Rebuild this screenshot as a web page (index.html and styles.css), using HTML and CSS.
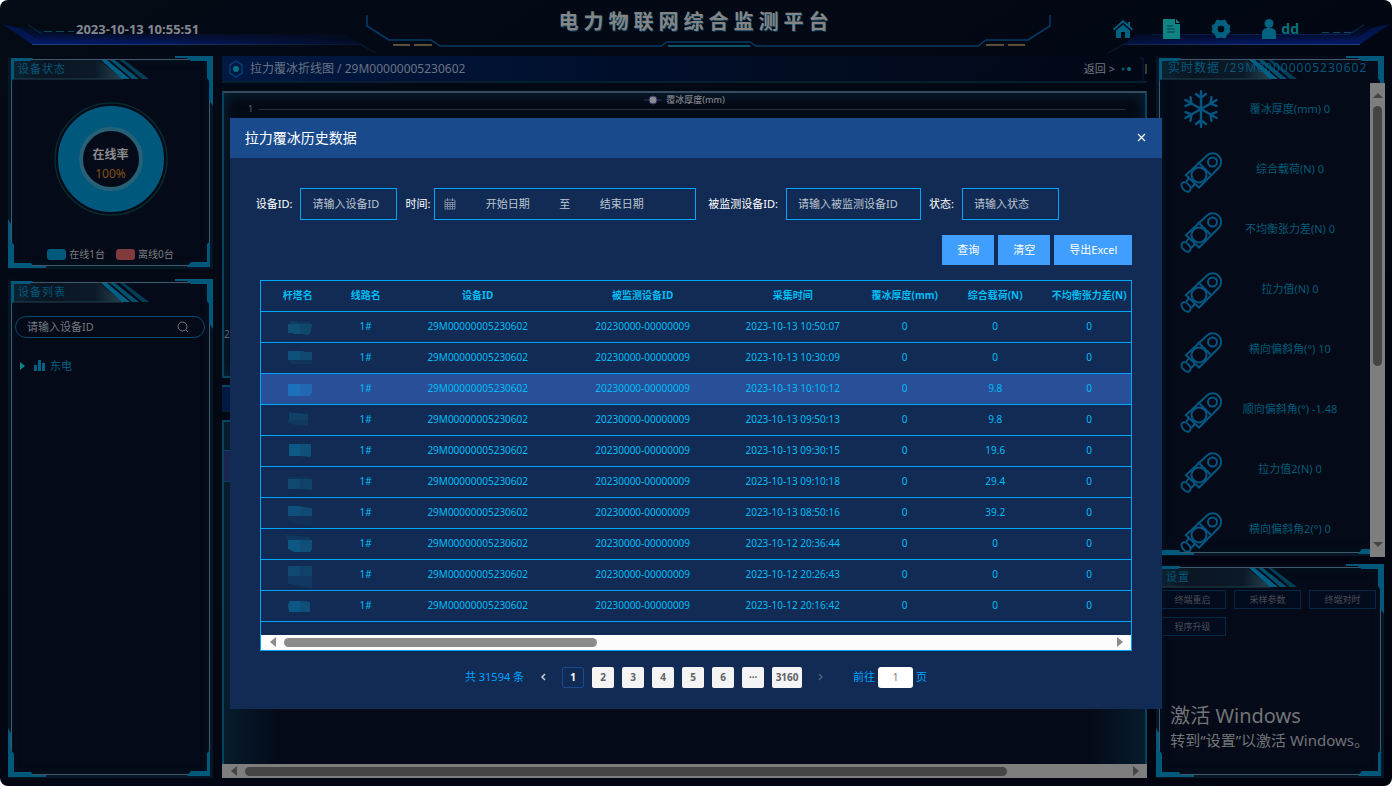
FILE: index.html
```html
<!DOCTYPE html>
<html lang="zh-CN">
<head>
<meta charset="utf-8">
<title>电力物联网综合监测平台</title>
<link rel="stylesheet" href="styles.css">
</head>
<body>
<svg class="defs" aria-hidden="true">
  <defs>
    <linearGradient id="tabFill" x1="0" x2="1" y1="0" y2="0"><stop offset="0" stop-color="#0c2433"/><stop offset=".3" stop-color="#0a1522"/><stop offset=".75" stop-color="#0c1a28"/><stop offset="1" stop-color="#26434f"/></linearGradient>
    <linearGradient id="wedge" x1="0" x2="0" y1="0" y2="1"><stop offset="0" stop-color="#041450" stop-opacity="0"/><stop offset=".5" stop-color="#041450" stop-opacity=".5"/><stop offset="1" stop-color="#061d78"/></linearGradient>
    <linearGradient id="fade" x1="0" x2="1" y1="0" y2="0"><stop offset="0" stop-color="#fff"/><stop offset=".4" stop-color="#fff" stop-opacity=".8"/><stop offset="1" stop-color="#fff" stop-opacity=".1"/></linearGradient>
    <mask id="fadeMask" maskUnits="userSpaceOnUse" x="0" y="0" width="400" height="56"><rect width="400" height="56" fill="url(#fade)"/></mask>
    <symbol id="c-tl" viewBox="0 0 24 26"><path d="M0 0H22L19 3H3V20L0 24Z" fill="#00587b"/></symbol>
    <symbol id="c-tr" viewBox="0 0 38 50"><path d="M0 0H38V50L34 44V25L32 22V5H16L12 2H0Z" fill="#00587b"/></symbol>
    <symbol id="c-bl" viewBox="0 0 38 50"><path d="M0 0L3 5V22L6 26V44H23L25 47H38V49H0Z" fill="#00587b"/></symbol>
    <symbol id="c-br" viewBox="0 0 24 26"><path d="M23 0V26H0L4 21H20V3Z" fill="#00587b"/></symbol>
    <symbol id="tab" viewBox="0 0 140 20"><path d="M0 0H88L112 19H0Z" fill="url(#tabFill)"/><path d="M0 19H112" stroke="#23414f"/><path d="M90 0H96L119 19H111Z" fill="#005f84"/><path d="M99 0H104L128 19H121Z" fill="#00506f"/><path d="M109 0H113L138 19H131Z" fill="#003d57"/></symbol>
    <symbol id="sensor" viewBox="0 0 42 46"><g fill="none" stroke="#025782" stroke-width="2"><path d="M19 15L27 7.500A8.500 8.500 0 0 1 39 19.500L19 39.500L6 27Z"/><path d="M18 14L31 27"/><circle cx="19" cy="27" r="7.500"/><circle cx="32.500" cy="14" r="4.500"/><path d="M9 30L6 34M15 36L11 40"/><ellipse cx="6" cy="39" rx="3.500" ry="5.500" transform="rotate(-42 6 39)"/></g></symbol>
  </defs>
</svg>

<div class="app">
  <header class="top">
    <svg class="top-art" viewBox="0 0 1392 56" preserveAspectRatio="none" aria-hidden="true">
      <g mask="url(#fadeMask)"><path d="M2 24L32 44H360L345 34H70L40 30Z" fill="url(#wedge)"/><path d="M2 24L32 44L44 44L20 28Z" fill="#041a5c" opacity=".7"/><path d="M32 44.500H360" stroke="#1d4379"/></g>
      <path d="M360 44L376 53" stroke="#0a2038"/>
      <path d="M28 25L42 34" stroke="#063244"/>
      <g transform="translate(1392 0) scale(-1 1)"><g mask="url(#fadeMask)"><path d="M2 24L32 44H268L255 34H70L40 30Z" fill="url(#wedge)"/><path d="M2 24L32 44L44 44L20 28Z" fill="#041a5c" opacity=".7"/><path d="M32 44.500H268" stroke="#1d4379"/><path d="M42 34.500H240" stroke="#06255e"/></g><path d="M268 44L284 53" stroke="#0a2038"/><path d="M28 25L42 34" stroke="#063244"/></g>
      <path d="M44 31.500H74" stroke="#0a4a55" stroke-dasharray="8 4"/>
      <path d="M1322 32.500H1352" stroke="#0a4a55" stroke-dasharray="7 4"/>
      <path d="M367 15V26L389 40H431L440 46H661L667 42H750L756 46H978L986 40H1028L1050 26V15" fill="none" stroke="#033b66" stroke-width="1.500"/>
      <path d="M668 46H750" stroke="#0c5268" stroke-width="2"/>
      <path d="M393 45H410M414 45H432M986 45H1004M1008 45H1025" stroke="#5a4f38" stroke-width="2"/>
    </svg>
    <time class="clock">2023-10-13 10:55:51</time>
    <h1 class="brand">电力物联网综合监测平台</h1>
    <nav class="tools">
      <a href="#home" aria-label="首页"><svg width="20" height="20" viewBox="0 0 20 20"><path fill="#006282" d="M10 1L0 10L1 11.500L10 3.500L19 11.500L20 10L17 7V3H15V5ZM10 5.500L3 11.500V19H8V13H12V19H17V11.500Z"/></svg></a>
      <a href="#report" aria-label="报表"><svg width="18" height="20" viewBox="0 0 18 20"><path fill="#0f8583" d="M0 0H12V5H17V20H0ZM13 0L17 4H13Z"/><path d="M4 7H10M4 10H12M4 13H12" stroke="#033a4c"/></svg></a>
      <a href="#settings" aria-label="设置"><svg width="20" height="20" viewBox="0 0 20 20"><path fill="#006282" fill-rule="evenodd" d="M6 1L10 2L14 1L16 5L19 7L18 10L19 13L16 15L14 19L10 18L6 19L4 15L1 13L2 10L1 7L4 5ZM10 6A4 4 0 1 0 10 14A4 4 0 1 0 10 6Z" stroke="#006282" stroke-linejoin="round"/></svg></a>
      <a href="#user" class="user"><svg width="16" height="20" viewBox="0 0 16 20"><circle cx="8" cy="4.500" r="4.500" fill="#006282"/><path fill="#006282" d="M1 20V14C1 10 4 9 8 9S15 10 15 14V20Z"/></svg>dd</a>
    </nav>
  </header>

  <main class="board">
    <div class="col side-left">
      <section class="panel status">
        <svg class="tab"><use href="#tab"/></svg><svg class="k tl"><use href="#c-tl"/></svg><svg class="k tr"><use href="#c-tr"/></svg><svg class="k bl"><use href="#c-bl"/></svg><svg class="k br"><use href="#c-br"/></svg>
        <h2>设备状态</h2>
        <div class="donut">
          <svg width="116" height="116" viewBox="0 0 116 116" aria-hidden="true"><circle cx="58" cy="58" r="56" fill="none" stroke="#052a30" stroke-width="1.500"/><circle cx="58" cy="58" r="41" fill="none" stroke="#00597c" stroke-width="24"/><circle cx="58" cy="58" r="30" fill="none" stroke="#266178" stroke-width="4"/></svg>
          <div class="donut-text"><b>在线率</b><span>100%</span></div>
        </div>
        <div class="legend"><i class="on"></i><span>在线1台</span><i class="off"></i><span>离线0台</span></div>
      </section>
      <section class="panel devices">
        <svg class="tab"><use href="#tab"/></svg><svg class="k tl"><use href="#c-tl"/></svg><svg class="k tr"><use href="#c-tr"/></svg><svg class="k bl"><use href="#c-bl"/></svg><svg class="k br"><use href="#c-br"/></svg>
        <h2>设备列表</h2>
        <div class="search"><input type="text" placeholder="请输入设备ID" aria-label="搜索设备ID"><svg width="12" height="12" viewBox="0 0 12 12"><circle cx="5.500" cy="5.500" r="4.500" fill="none" stroke="#747980"/><path d="M9 9L11 11" stroke="#747980"/></svg></div>
        <div class="tree"><svg width="6" height="8" viewBox="0 0 6 8"><path d="M0 0L5 4L0 8Z" fill="#0a8785"/></svg><svg width="12" height="12" viewBox="0 0 12 12"><path d="M0 5H3V11H0ZM4 0H7V11H4ZM8 3H11V11H8Z" fill="#006386"/></svg><span>东电</span></div>
      </section>
    </div>

    <div class="col center">
      <div class="crumb">
        <svg width="16" height="18" viewBox="0 0 16 18"><path d="M8 1L14 5V13L8 17L2 13V5Z" fill="none" stroke="#013e6d" stroke-width="1.500"/><circle cx="8" cy="9" r="3" fill="#0b7085"/></svg>
        <span class="crumb-text">拉力覆冰折线图 / 29M00000005230602</span>
        <a href="#back">返回 &gt;</a><svg width="34" height="24" viewBox="0 0 34 24"><circle cx="4" cy="12" r="1.500" fill="#07566c"/><circle cx="10" cy="12" r="2" fill="#087080"/><path d="M21 1H24V23H22" fill="none" stroke="#061d42"/><path d="M27 7V17" stroke="#777350"/></svg>
      </div>
      <section class="chart">
        <div class="series"><svg width="18" height="10" viewBox="0 0 18 10"><path d="M0 5H18" stroke="#2f3967"/><circle cx="9" cy="5" r="4" fill="#8a8a91" stroke="#2f3967"/></svg>覆冰厚度(mm)</div>
        <div class="axis"><span>1</span><hr></div>
        <span class="axis-end">2</span>
      </section>
      <div class="crumb second"></div>
      <section class="grid-under"><div class="grid-row"></div></section>
      <div class="hbar dim"><i class="arrow left"></i><i class="thumb"></i><i class="arrow right"></i></div>
    </div>

    <div class="col side-right">
      <section class="panel live">
        <svg class="tab"><use href="#tab"/></svg><svg class="k tl"><use href="#c-tl"/></svg><svg class="k tr"><use href="#c-tr"/></svg><svg class="k bl"><use href="#c-bl"/></svg><svg class="k br"><use href="#c-br"/></svg>
        <h2>实时数据 /29M00000005230602</h2>
        <div class="live-body">
          <ul>
            <li><svg width="42" height="42" viewBox="0 0 42 42"><g fill="none" stroke="#025782" stroke-width="2.400" stroke-linecap="round"><g id="arm"><path d="M21 19V1M16 4L21 8L26 4"/></g><use href="#arm" transform="rotate(60 21 19)"/><use href="#arm" transform="rotate(120 21 19)"/><use href="#arm" transform="rotate(180 21 19)"/><use href="#arm" transform="rotate(240 21 19)"/><use href="#arm" transform="rotate(300 21 19)"/></g></svg><span>覆冰厚度(mm) 0</span></li>
            <li><svg width="42" height="46"><use href="#sensor"/></svg><span>综合载荷(N) 0</span></li>
            <li><svg width="42" height="46"><use href="#sensor"/></svg><span>不均衡张力差(N) 0</span></li>
            <li><svg width="42" height="46"><use href="#sensor"/></svg><span>拉力值(N) 0</span></li>
            <li><svg width="42" height="46"><use href="#sensor"/></svg><span>横向偏斜角(°) 10</span></li>
            <li><svg width="42" height="46"><use href="#sensor"/></svg><span>顺向偏斜角(°) -1.48</span></li>
            <li><svg width="42" height="46"><use href="#sensor"/></svg><span>拉力值2(N) 0</span></li>
            <li><svg width="42" height="46"><use href="#sensor"/></svg><span>横向偏斜角2(°) 0</span></li>
          </ul>
          <div class="vbar"><i class="arrow up"></i><i class="thumb"></i><i class="arrow down"></i></div>
        </div>
      </section>
      <section class="panel setup">
        <svg class="tab"><use href="#tab"/></svg><svg class="k tl"><use href="#c-tl"/></svg><svg class="k tr"><use href="#c-tr"/></svg><svg class="k bl"><use href="#c-bl"/></svg><svg class="k br"><use href="#c-br"/></svg>
        <h2>设置</h2>
        <div class="setup-grid"><button type="button">终端重启</button><button type="button">采样参数</button><button type="button">终端对时</button><button type="button">程序升级</button></div>
      </section>
    </div>
  </main>

  <div class="overlay">
    <div class="dialog" role="dialog" aria-labelledby="dlg-title">
      <div class="dialog-head"><h2 id="dlg-title">拉力覆冰历史数据</h2><button type="button" aria-label="关闭"><svg width="9" height="9" viewBox="0 0 9 9"><path d="M1 1L8 8M8 1L1 8" stroke="#fff" stroke-width="1.200"/></svg></button></div>
      <div class="dialog-body">
        <form class="filters">
          <label for="dev">设备ID:</label><input id="dev" class="w-s" type="text" placeholder="请输入设备ID">
          <label for="from">时间:</label>
          <div class="range"><svg width="12" height="12" viewBox="0 0 12 12"><path d="M1 2H11V11H1ZM1 4.500H11M1 6.500H11M1 8.500H11M3.500 4V11M6 4V11M8.500 4V11M3.500 0V3M8.500 0V3" fill="none" stroke="#8c98ae" stroke-width=".8"/></svg><input id="from" type="text" placeholder="开始日期"><span>至</span><input type="text" placeholder="结束日期" aria-label="结束日期"></div>
          <label for="mon">被监测设备ID:</label><input id="mon" class="w-m" type="text" placeholder="请输入被监测设备ID">
          <label for="st">状态:</label><input id="st" class="w-s" type="text" placeholder="请输入状态">
        </form>
        <div class="actions"><button type="button">查询</button><button type="button">清空</button><button type="button">导出Excel</button></div>
        <div class="table-box">
          <div class="table-view">
          <table>
            <colgroup><col class="c1"><col class="c2"><col class="c3"><col class="c4"><col class="c5"><col class="c6"><col class="c7"><col class="c8"></colgroup>
            <thead><tr><th>杆塔名</th><th>线路名</th><th>设备ID</th><th>被监测设备ID</th><th>采集时间</th><th>覆冰厚度(mm)</th><th>综合载荷(N)</th><th>不均衡张力差(N)</th></tr></thead>
            <tbody>
              <tr><td><svg class="mask" viewBox="0 0 28 30"><path d="M4 9H12V10H24V12H4Z" fill="#103a60"/><path d="M2 12H14V22H7V21H2Z" fill="#104f76"/><path d="M14 12H26L25 19L23 23L14 22Z" fill="#10486c"/></svg></td><td>1#</td><td>29M00000005230602</td><td>20230000-00000009</td><td>2023-10-13 10:50:07</td><td>0</td><td>0</td><td>0</td></tr>
              <tr><td><svg class="mask" viewBox="0 0 28 30"><path d="M2 8H14V17H2Z" fill="#0e527c"/><path d="M14 8H18V9H26V17H14Z" fill="#104a70"/><path d="M2 17H26V21H5Z" fill="#10345a"/></svg></td><td>1#</td><td>29M00000005230602</td><td>20230000-00000009</td><td>2023-10-13 10:30:09</td><td>0</td><td>0</td><td>0</td></tr>
              <tr class="hover"><td><svg class="mask" viewBox="0 0 28 30"><path d="M2 10H14V22H2Z" fill="#1c70bc"/><path d="M14 10H26V18L24 22H14Z" fill="#2168b0"/></svg></td><td>1#</td><td>29M00000005230602</td><td>20230000-00000009</td><td>2023-10-13 10:10:12</td><td>0</td><td>9.8</td><td>0</td></tr>
              <tr><td><svg class="mask" viewBox="0 0 28 30"><path d="M3 7L10 8L22 9V15H3Z" fill="#104066"/><path d="M2 15H22V21L10 20L2 18Z" fill="#103960"/></svg></td><td>1#</td><td>29M00000005230602</td><td>20230000-00000009</td><td>2023-10-13 09:50:13</td><td>0</td><td>9.8</td><td>0</td></tr>
              <tr><td><svg class="mask" viewBox="0 0 28 30"><path d="M3 8H14V20H3Z" fill="#0d5a87"/><path d="M14 8H25V21L14 20Z" fill="#0f517a"/></svg></td><td>1#</td><td>29M00000005230602</td><td>20230000-00000009</td><td>2023-10-13 09:30:15</td><td>0</td><td>19.6</td><td>0</td></tr>
              <tr><td><svg class="mask" viewBox="0 0 28 30"><path d="M2 10H22L26 12H2Z" fill="#103459"/><path d="M2 12H14V22H2Z" fill="#0f4871"/><path d="M14 12H26V23L14 22Z" fill="#104268"/></svg></td><td>1#</td><td>29M00000005230602</td><td>20230000-00000009</td><td>2023-10-13 09:10:18</td><td>0</td><td>29.4</td><td>0</td></tr>
              <tr><td><svg class="mask" viewBox="0 0 28 30"><path d="M2 8H14V18H2Z" fill="#0e507b"/><path d="M14 8L18 9L26 10V18H14Z" fill="#104a70"/><path d="M2 18H26V28L10 26L2 22Z" fill="#113158"/></svg></td><td>1#</td><td>29M00000005230602</td><td>20230000-00000009</td><td>2023-10-13 08:50:16</td><td>0</td><td>39.2</td><td>0</td></tr>
              <tr><td><svg class="mask" viewBox="0 0 28 30"><path d="M0 6L24 8V11H0Z" fill="#10375d"/><path d="M2 11H14V23H8L2 20Z" fill="#0d5784"/><path d="M14 11H26V20L24 23H14Z" fill="#0f4f78"/></svg></td><td>1#</td><td>29M00000005230602</td><td>20230000-00000009</td><td>2023-10-12 20:36:44</td><td>0</td><td>0</td><td>0</td></tr>
              <tr><td><svg class="mask" viewBox="0 0 28 30"><path d="M2 6H14V16H2Z" fill="#0f4872"/><path d="M14 6H26V16H14Z" fill="#104168"/><path d="M2 16H26V28L14 26L2 24Z" fill="#103860"/></svg></td><td>1#</td><td>29M00000005230602</td><td>20230000-00000009</td><td>2023-10-12 20:26:43</td><td>0</td><td>0</td><td>0</td></tr>
              <tr><td><svg class="mask" viewBox="0 0 28 30"><path d="M4 10H14V21H3L2 14Z" fill="#0d5784"/><path d="M14 10L24 11V21H14Z" fill="#0f4f78"/></svg></td><td>1#</td><td>29M00000005230602</td><td>20230000-00000009</td><td>2023-10-12 20:16:42</td><td>0</td><td>0</td><td>0</td></tr>
            </tbody>
          </table>
          </div>
          <div class="hbar"><i class="arrow left"></i><i class="thumb"></i><i class="arrow right"></i></div>
        </div>
        <div class="pager">
          <span class="total">共 31594 条</span>
          <button type="button" class="nav" aria-label="上一页"><svg width="6" height="8" viewBox="0 0 6 8"><path d="M5 1L2 4L5 7" fill="none" stroke="#c5ccd6" stroke-width="1.500"/></svg></button>
          <button type="button" class="current">1</button><button type="button">2</button><button type="button">3</button><button type="button">4</button><button type="button">5</button><button type="button">6</button><button type="button" aria-label="更多">···</button><button type="button" class="wide">3160</button>
          <button type="button" class="nav" aria-label="下一页"><svg width="6" height="8" viewBox="0 0 6 8"><path d="M1 1L4 4L1 7" fill="none" stroke="#536684" stroke-width="1.200"/></svg></button>
          <label class="jump" for="jump">前往</label><input id="jump" type="text" value="1"><span>页</span>
        </div>
      </div>
    </div>
  </div>

  <div class="watermark"><p class="big">激活 Windows</p><p>转到“设置”以激活 Windows。</p></div>
</div>
</body>
</html>
```
FILE: styles.css
```css
* { box-sizing: border-box; }
body { margin: 0; background: #fff; font-family: "Noto Sans", "Noto Sans CJK SC", sans-serif; font-size: 11px; line-height: 16px; }
h1, h2, p, ul, hr { margin: 0; padding: 0; }
button, input { font: inherit; padding: 0; border: 0; }
input { background: transparent; outline: 0; min-width: 0; }
a { color: inherit; text-decoration: none; }
.defs { position: absolute; width: 0; height: 0; }

.app { position: relative; display: flex; flex-direction: column; min-height: 100vh; border-radius: 8px; overflow: hidden; background: linear-gradient(150deg, #040b15, #020714 45%, #01040f); }

/* header */
.top { position: relative; display: grid; grid-template-columns: 1fr auto 1fr; align-items: start; height: 56px; }
.top-art { position: absolute; inset: 0; width: 100%; height: 56px; }
.top > :not(.top-art) { position: relative; }
.clock { padding: 21px 0 0 76px; font-size: 13px; font-weight: 700; color: #828894; }
.brand { padding-top: 8px; font-size: 20px; line-height: 28px; letter-spacing: 5px; color: #858585; text-shadow: 1px 1px 0 #063f5e; }
.tools { display: flex; align-items: center; justify-content: flex-end; gap: 30px; padding: 19px 93px 0 0; }
.tools a { display: flex; align-items: center; height: 20px; }
.tools .user { gap: 4px; font-size: 14px; font-weight: 700; color: #08727c; }

.board { flex: 1; display: grid; grid-template-columns: 205px minmax(0, 1fr) 228px; gap: 9px; padding: 0 8px 8px; }
.col { display: flex; flex-direction: column; }
.side-left { gap: 10px; }
.side-right { gap: 8px; }

/* framed panel */
.panel { position: relative; border: 3px solid #071624; border-top-color: transparent; box-shadow: inset 0 0 0 1px #40596a, inset 0 0 10px #06182a; background: #040a17; }
.panel h2 { position: relative; padding: 2px 7px 0; font-size: 11px; line-height: 16px; font-weight: 400; letter-spacing: 1px; color: #01587a; white-space: nowrap; }
.k, .tab { position: absolute; }
.tl { left: 0; top: -1px; width: 24px; height: 26px; }
.tr { right: -3px; top: -3px; width: 38px; height: 50px; }
.bl { left: -3px; bottom: -3px; width: 38px; height: 50px; }
.br { right: -1px; bottom: -1px; width: 24px; height: 26px; }
.tab { left: 0; top: 1px; width: 140px; height: 20px; }

.status { height: 213px; }
.donut { position: relative; display: flex; justify-content: center; padding-top: 24px; }
.donut svg { display: block; }
.donut-text { position: absolute; top: 70px; display: flex; flex-direction: column; align-items: center; gap: 3px; font-size: 12px; color: #8c8c8f; }
.donut-text span { color: #825016; }
.legend { display: flex; align-items: center; justify-content: center; gap: 3px; padding-top: 29px; font-size: 10px; color: #7b7d82; }
.legend i { width: 19px; height: 11px; border-radius: 3px; }
.legend .on { background: #00597c; }
.legend .off { background: #823b3d; margin-left: 8px; }

.devices { flex: 1; }
.search { display: flex; align-items: center; justify-content: space-between; height: 22px; margin: 16px 5px 0 4px; padding: 0 15px 0 11px; border: 1px solid #014b6d; border-radius: 11px; }
.search input { flex: 1; color: #747980; }
.search input::placeholder { color: #747980; opacity: 1; }
.tree { display: flex; align-items: center; gap: 4px; padding: 20px 9px 0; color: #006282; }
.tree svg + svg { margin-left: 4px; }

/* centre column */
.crumb { display: flex; align-items: center; gap: 6px; height: 27px; padding-left: 6px; background: linear-gradient(90deg, #001943, #010e2a 45%, transparent); border-bottom: 2px solid #04202f; color: #6a7384; }
.crumb svg { flex: none; }
.crumb-text { flex: 1; font-size: 12px; }
.crumb a { color: #737780; }
.crumb a + svg { margin: 0 -6px 0 -2px; }
.center .chart { position: relative; height: 287px; margin-top: 8px; border: 2px solid #034461; border-top-color: #344c5b; background: #050a17; box-shadow: inset 0 0 14px #08283c; }
.series { display: flex; justify-content: center; align-items: center; gap: 4px; height: 13px; font-size: 9px; font-weight: 500; color: #82838a; }
.axis { display: flex; align-items: center; gap: 6px; height: 6px; padding: 0 20px 0 24px; font-size: 9px; color: #5d626c; }
.axis hr { flex: 1; border: 0; border-top: 1px solid #2a303b; }
.axis-end { position: absolute; left: 0; top: 233px; font-size: 10px; color: #5d626c; }
.second { margin-top: 7px; border-top: 2px solid #024666; }
.grid-under { flex: 1; margin-top: 8px; padding-top: 28px; border: 1px solid #034461; border-width: 2px 2px 0; background: linear-gradient(90deg, #071c2d, #040a17 6%, #040a17 94%, #071c2d); }
.grid-row { height: 32px; border: 1px solid #034461; border-width: 1px 0; background: #17254f; }

/* scroll bars */
.hbar { display: flex; align-items: center; height: 15px; padding: 0 8px 0 9px; gap: 8px; background: #fcfcfc; }
.hbar .thumb { width: 313px; height: 9px; border-radius: 5px; background: #8b8b8b; }
.hbar.dim { height: 14px; background: #7e7e7e; }
.hbar.dim .thumb { width: 762px; background: #454545; }
.arrow { width: 0; height: 0; border: 5px solid transparent; }
.arrow.left { border-width: 5px 6px 5px 0; border-right-color: #8b8b8b; }
.arrow.right { margin-left: auto; border-width: 5px 0 5px 6px; border-left-color: #8b8b8b; }
.arrow.up { border-width: 0 5px 5px; border-bottom-color: #454545; }
.arrow.down { margin-top: auto; border-width: 5px 5px 0; border-top-color: #454545; }
.dim .arrow.left { border-right-color: #454545; }
.dim .arrow.right { border-left-color: #454545; }

/* live data */
.live { height: 500px; }
.live h2 { padding-left: 9px; padding-top: 1px; font-size: 12px; }
.live-body { position: relative; display: flex; height: 474px; margin: 7px -4px 0 0; }
.live ul { flex: 1; list-style: none; overflow: hidden; height: 473px; margin-top: -4px; padding-left: 21px; }
.live li { display: flex; align-items: center; height: 60px; color: #015c78; }
.live li span { flex: 1; text-align: center; padding-right: 12px; }
.live li svg { margin-top: 3px; flex: none; }
.vbar { display: flex; flex-direction: column; align-items: center; width: 15px; padding: 10px 0; gap: 8px; background: #7e7e7e; }
.vbar .thumb { width: 9px; height: 260px; border-radius: 5px; background: #454545; }

.setup { flex: 1; }
.setup-grid { display: grid; grid-template-columns: repeat(3, 1fr); gap: 8px; padding: 5px 5px 0 0; }
.setup-grid button { height: 19px; border: 1px solid #052746; background: #030b1f; color: #4b4d54; font-size: 9px; line-height: 12px; }

/* dialog */
.overlay { position: absolute; inset: 0; display: flex; justify-content: center; align-items: flex-start; padding-top: 15vh; }
.dialog { width: 67%; background: #112b54; color: #fff; }
.dialog-head { display: flex; align-items: center; justify-content: space-between; height: 40px; padding: 0 16px 0 15px; background: #184a8c; }
.dialog-head h2 { font-size: 14px; line-height: 20px; font-weight: 400; }
.dialog-head button { display: flex; background: none; }
.dialog-body { padding: 30px 30px 21px; }
.filters { display: flex; align-items: center; margin-left: -4px; gap: 8px; white-space: nowrap; }
.filters > input, .range { height: 32px; border: 1px solid #00a3ff; }
.filters > input { padding: 0 11px; color: #c0c4cc; }
.filters input::placeholder { color: #bcc3cf; opacity: 1; }
.w-s { width: 97px; }
.w-m { width: 135px; }
.range { display: flex; align-items: center; width: 262px; margin: 0 4px 0 -4px; padding: 0 22px 0 9px; color: #bcc3cf; }
.range input { flex: 1; width: 80px; text-align: center; }
.actions { display: flex; justify-content: flex-end; gap: 4px; padding: 15px 0; }
.actions button { height: 30px; padding: 0 15px; background: #409eff; color: #fff; }
.table-box { border: 1px solid #00a3ff; }
.table-view { overflow: hidden; padding-bottom: 13px; }
table { width: 878px; border-collapse: separate; border-spacing: 0; table-layout: fixed; font-size: 10px; color: #00bdf5; }
.c1 { width: 74px; } .c2 { width: 62px; } .c3 { width: 162px; } .c4 { width: 168px; } .c5 { width: 132px; } .c6 { width: 92px; } .c7 { width: 89px; } .c8 { width: 99px; }
th, td { height: 31px; padding: 0 0 2px; text-align: center; border-bottom: 1px solid #00a3ff; white-space: nowrap; line-height: 14px; }
td:first-child { padding: 0 0 0 4px; }
.hover td { background: #284f98; }
.mask { display: block; width: 28px; height: 30px; margin: 0 auto; }
.pager { display: flex; align-items: center; justify-content: center; gap: 8px; padding-top: 16px; color: #00a3ff; }
.pager button { width: 22px; height: 21px; border-radius: 2px; background: #f4f4f5; color: #606266; font-size: 10px; font-weight: 700; line-height: 14px; }
.pager .nav { display: flex; align-items: center; justify-content: center; background: none; }
.pager .current { background: #112b54; border: 1px solid #184a8c; color: #fff; }
.pager .wide { width: 30px; }
.pager .jump { margin: 0 -5px 0 13px; }
.pager input { width: 35px; height: 21px; border-radius: 3px; background: #fff; color: #77797d; text-align: center; font-size: 10px; }
.pager input + span { margin-left: -5px; }

.watermark { position: absolute; right: 23px; bottom: 35px; color: #737478; font-size: 15px; line-height: 22px; white-space: nowrap; }
.watermark .big { font-size: 20px; line-height: 26px; }
```
